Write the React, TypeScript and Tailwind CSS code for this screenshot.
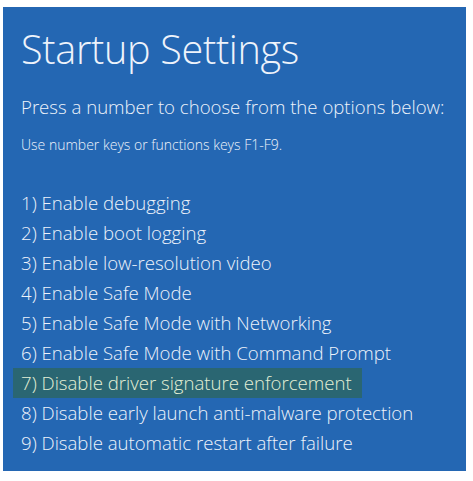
const options = [
  'Enable debugging',
  'Enable boot logging',
  'Enable low-resolution video',
  'Enable Safe Mode',
  'Enable Safe Mode with Networking',
  'Enable Safe Mode with Command Prompt',
  'Disable driver signature enforcement',
  'Disable early launch anti-malware protection',
  'Disable automatic restart after failure',
];

export default function App() {
  return (
    <div className="w-[473px] h-[481px] bg-white pt-[7px] pl-[3px]">
      <div
        className="w-[463px] h-[464px] bg-[#2467b3] text-[#eef3fb] pl-[18px] pt-[14px]"
        style={{ fontFamily: '"Open Sans", "Noto Sans", sans-serif' }}
      >
        <h1 className="text-[39.6px] font-light leading-[56px] tracking-[-0.3px] whitespace-nowrap">
          Startup Settings
        </h1>
        <p className="mt-[17px] text-[18.6px] font-light leading-[26px] whitespace-nowrap">
          Press a number to choose from the options below:
        </p>
        <p className="mt-[16px] text-[14px] font-light leading-[18px] whitespace-nowrap">
          Use number keys or functions keys F1-F9.
        </p>

        <ul className="mt-[34px] flex flex-col">
          {options.map((label, i) => (
            <li
              key={label}
              className={`h-[30px] flex items-center text-[18.6px] font-light leading-none whitespace-nowrap ${
                i === 6 ? '-ml-[8px] pl-[8px] w-[349px] bg-[#2a6672] text-[#e4f0d6]' : ''
              }`}
            >
              {i + 1}) {label}
            </li>
          ))}
        </ul>
      </div>
    </div>
  );
}
